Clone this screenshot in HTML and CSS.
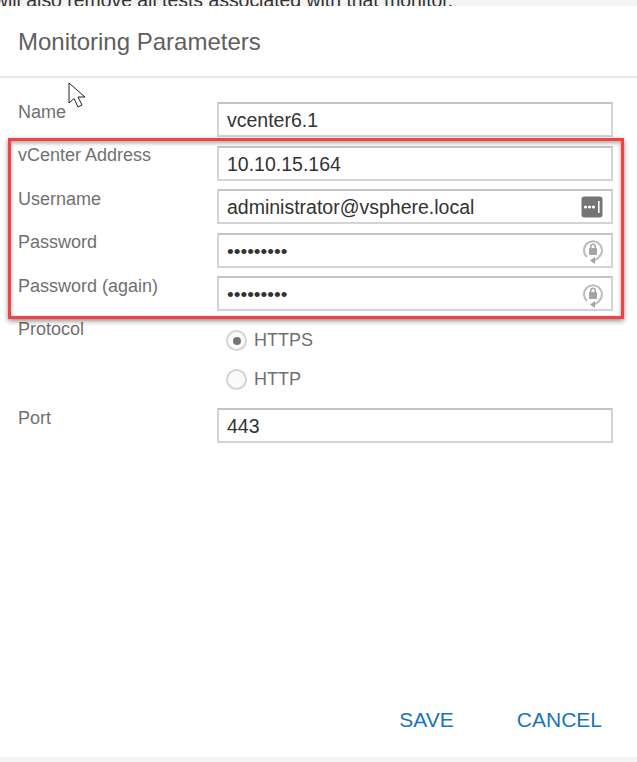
FILE: index.html
```html
<!DOCTYPE html>
<html lang="en">
<head>
<meta charset="utf-8">
<title>Monitoring Parameters</title>
<link rel="stylesheet" href="styles.css">
</head>
<body>
<div class="page">
  <div class="backdrop"><p class="backdrop-text">will also remove all tests associated with that monitor.</p></div>
  <section class="dialog">
    <header class="dialog-head"><h1 class="dialog-title">Monitoring Parameters</h1></header>
    <form class="form">
      <div class="row"><span class="label">Name</span><div class="field">vcenter6.1</div></div>
      <div class="row"><span class="label">vCenter Address</span><div class="field">10.10.15.164</div></div>
      <div class="row"><span class="label">Username</span><div class="field">administrator@vsphere.local
        <svg class="icon" width="22" height="22" viewBox="0 0 22 22"><rect width="21" height="21" x="0.5" y="0.5" rx="3" fill="#757575"/><circle cx="4.500" cy="11" r="1.600" fill="#fff"/><circle cx="8.500" cy="11" r="1.600" fill="#fff"/><circle cx="12.500" cy="11" r="1.600" fill="#fff"/><rect x="17" y="5" width="1.600" height="12" fill="#fff"/></svg>
      </div></div>
      <div class="row"><span class="label">Password</span><div class="field dots">•••••••••
        <svg class="icon icon-key" width="22" height="26" viewBox="0 0 22 26"><path d="M5 19A9 9 0 1 1 17.500 18.500Q16 21 13 22" fill="none" stroke="#bcbcbc" stroke-width="2"/><path d="M8 22.500l5-3.500v7z" fill="#a4a4a4"/><rect x="7" y="10" width="8" height="7" rx="1" fill="#a4a4a4"/><path d="M8.800 10.500V8.500a2.200 2.200 0 0 1 4.400 0v2" fill="none" stroke="#a4a4a4" stroke-width="1.500"/></svg>
      </div></div>
      <div class="row"><span class="label">Password (again)</span><div class="field dots">•••••••••
        <svg class="icon icon-key" width="22" height="26" viewBox="0 0 22 26"><path d="M5 19A9 9 0 1 1 17.500 18.500Q16 21 13 22" fill="none" stroke="#bcbcbc" stroke-width="2"/><path d="M8 22.500l5-3.500v7z" fill="#a4a4a4"/><rect x="7" y="10" width="8" height="7" rx="1" fill="#a4a4a4"/><path d="M8.800 10.500V8.500a2.200 2.200 0 0 1 4.400 0v2" fill="none" stroke="#a4a4a4" stroke-width="1.500"/></svg>
      </div></div>
      <div class="row row-protocol"><span class="label">Protocol</span>
        <div class="radios">
          <div class="radio-item"><span class="radio radio-on"></span>HTTPS</div>
          <div class="radio-item"><span class="radio"></span>HTTP</div>
        </div>
      </div>
      <div class="row"><span class="label">Port</span><div class="field">443</div></div>
    </form>
    <footer class="actions"><a class="action">SAVE</a><a class="action">CANCEL</a></footer>
  </section>
  <div class="highlight"></div>
  <svg class="cursor" width="20" height="28" viewBox="0 0 20 28"><path d="M1 1v20l5-4.500 4 8.500 4-2-4-8h7z" fill="#fff" stroke="#222" stroke-width="1"/></svg>
</div>
</body>
</html>
```
FILE: styles.css
```css
* { box-sizing: border-box; }
html, body { margin: 0; padding: 0; }
body { background: #fff; font-family: "Liberation Sans", Arial, sans-serif; }
.page { position: relative; width: 637px; height: 762px; overflow: hidden; background: #f3f3f3; }
.backdrop { height: 6px; overflow: hidden; position: relative; }
.backdrop-text { margin: -10px 0 0 -6px; font-size: 19.4px; line-height: 20px; color: #333; white-space: nowrap; }
.dialog { height: 751px; background: #fff; display: flex; flex-direction: column; }
.dialog-head { height: 72px; border-bottom: 2px solid #e8e8e8; padding: 22px 18px 0; }
.dialog-title { margin: 0; font-size: 24px; line-height: 28px; font-weight: 400; color: #5f5f5f; }
.form { padding: 24px 24px 0 18px; display: flex; flex-direction: column; gap: 8.5px; flex: 1; }
.row { display: flex; align-items: flex-start; min-height: 35px; }
.label { width: 199px; flex: none; margin-top: -0.25px; font-size: 18px; line-height: 20px; color: #707070; }
.field { position: relative; flex: 1; height: 35px; border: 2px solid #d4d4d4; border-top-color: #c4c4c4; padding: 0 8px; font-size: 19.5px; line-height: 33px; color: #333; }
.dots { font-size: 19.200px; }
.icon { position: absolute; right: 8px; top: 50%; transform: translateY(-50%); }
.icon-key { right: 7px; margin-top: 1px; }
.row-protocol { height: 80px; }
.radios { display: flex; flex-direction: column; gap: 19px; padding: 11px 0 0 9px; }
.radio-item { display: flex; align-items: center; gap: 7px; height: 20px; font-size: 18px; color: #707070; }
.radio { width: 21px; height: 21px; border-radius: 50%; border: 2px solid #d4d4d4; background: #fafafa; position: relative; }
.radio-on::after { content: ""; position: absolute; left: 4.500px; top: 4.500px; width: 8px; height: 8px; border-radius: 50%; background: #757575; }
.actions { display: flex; justify-content: flex-end; gap: 63px; padding: 0 35px 25px 0; }
.action { font-size: 21px; line-height: 24px; color: #1a73c0; }
.highlight { position: absolute; left: 8px; top: 138px; width: 616px; height: 181px; border: 3px solid #f04444; box-shadow: 0 2px 5px rgba(0,0,0,.45), inset 0 2px 4px rgba(0,0,0,.35); pointer-events: none; }
.cursor { position: absolute; left: 68px; top: 82px; }
```
